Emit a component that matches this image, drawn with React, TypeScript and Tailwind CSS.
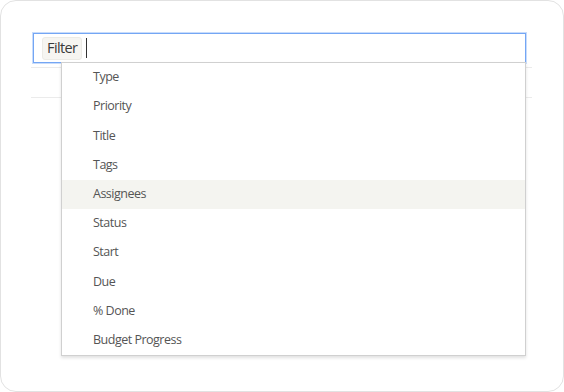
import React from "react";

const items = [
  "Type",
  "Priority",
  "Title",
  "Tags",
  "Assignees",
  "Status",
  "Start",
  "Due",
  "% Done",
  "Budget Progress",
];

export default function App() {
  return (
    <div
      className="w-[564px] h-[392px] bg-white"
      style={{ fontFamily: '"Open Sans", sans-serif' }}
    >
      <div className="w-[564px] h-[392px] rounded-[16px] border border-[#e2e2e2] bg-white pt-[32px] pl-[32px]">
        <div className="relative w-[493px]">
          <div className="h-[30px] border border-[#74a6f4] shadow-[0_0_0_1px_rgba(134,178,246,0.45)] flex items-center pl-[8px] bg-white">
            <div className="h-[23px] px-[4px] flex items-center rounded-[3px] bg-[#f6f5f1] border border-[#ecebe6] text-[14.5px] tracking-[-0.6px] text-[#3a3a3a]">
              Filter
            </div>
            <div className="ml-[4px] w-[1px] h-[20px] bg-[#333]" />
          </div>
          <div className="ml-[-2px] w-[501px] mt-[4px] h-[31px] border-t border-b border-[#ebebeb]" />
          <div className="absolute left-[28px] top-[29px] w-[465px] border border-[#d0d0d0] bg-white shadow-[0_2px_3px_rgba(0,0,0,0.12)]">
            {items.map((it) => (
              <div
                key={it}
                className={`h-[29.2px] flex items-center pl-[31px] text-[12.5px] tracking-[-0.5px] text-[#555] ${
                  it === "Assignees" ? "bg-[#f4f4f0]" : ""
                }`}
              >
                {it}
              </div>
            ))}
          </div>
        </div>
      </div>
    </div>
  );
}
